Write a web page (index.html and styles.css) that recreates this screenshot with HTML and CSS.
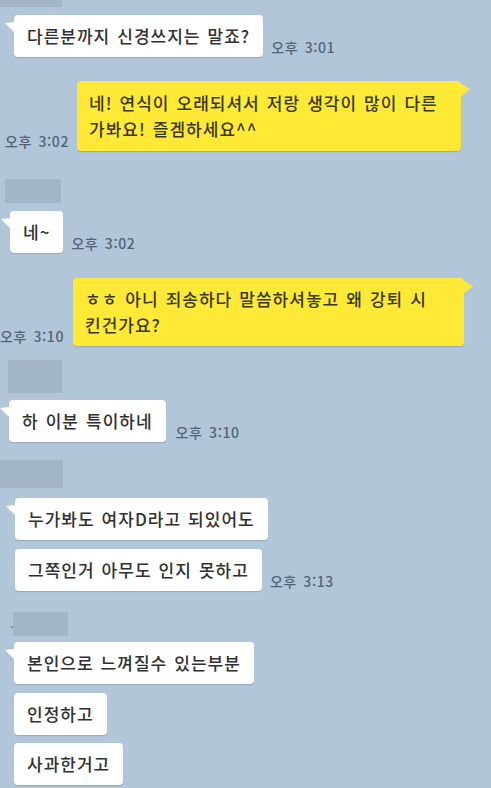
FILE: index.html
```html
<!DOCTYPE html>
<html lang="ko">
<head>
<meta charset="utf-8">
<link rel="stylesheet" href="styles.css">
</head>
<body>
<div class="chat">
  <div class="name name--a"></div>
  <div class="row in-a gap-8">
    <div class="bubble tail">다른분까지 신경쓰지는 말죠?</div>
    <span class="time">오후 3:01</span>
  </div>
  <div class="row out-a gap-24">
    <span class="time">오후 3:02</span>
    <div class="bubble bubble--out bubble--w1 tail-r">네! 연식이 오래되셔서 저랑 생각이 많이 다른 가봐요! 즐겜하세요^^</div>
  </div>

  <div class="name name--b gap-28"></div>
  <div class="row in-b gap-8">
    <div class="bubble tail">네~</div>
    <span class="time">오후 3:02</span>
  </div>
  <div class="row out-b gap-25">
    <span class="time">오후 3:10</span>
    <div class="bubble bubble--out bubble--w2 tail-r">ㅎㅎ 아니 죄송하다 말씀하셔놓고 왜 강퇴 시 킨건가요?</div>
  </div>

  <div class="name name--c gap-14"></div>
  <div class="row in-c gap-7">
    <div class="bubble tail">하 이분 특이하네</div>
    <span class="time time--wide">오후 3:10</span>
  </div>

  <div class="name name--d gap-18"></div>
  <div class="row in-d gap-10">
    <div class="bubble tail">누가봐도 여자D라고 되있어도</div>
  </div>
  <div class="row in-d gap-9">
    <div class="bubble">그쪽인거 아무도 인지 못하고</div>
    <span class="time">오후 3:13</span>
  </div>

  <div class="name name--e gap-21"><span class="dot"></span></div>
  <div class="row in-e gap-6">
    <div class="bubble tail">본인으로 느껴질수 있는부분</div>
  </div>
  <div class="row in-e gap-9">
    <div class="bubble">인정하고</div>
  </div>
  <div class="row in-e gap-8">
    <div class="bubble">사과한거고</div>
  </div>
</div>
</body>
</html>
```

FILE: styles.css
```css
html, body {
  margin: 0;
  padding: 0;
}

body {
  background: #b2c6d9;
  font-family: "Noto Sans CJK KR", "Noto Sans", sans-serif;
  height: 788px;
  overflow: hidden;
}

.chat {
  display: flex;
  flex-direction: column;
  align-items: flex-start;
}

.row {
  display: flex;
  align-items: flex-end;
  gap: 8px;
}

.name {
  background: #a3b5c8;
  height: 24px;
  position: relative;
}

.name--a { width: 62px; height: 7px; }
.name--b { width: 56px; margin-left: 5px; }
.name--c { width: 54px; margin-left: 8px; height: 33px; }
.name--d { width: 63px; height: 28px; }
.name--e { width: 55px; margin-left: 13px; }

.dot {
  position: absolute;
  left: -2px;
  top: 14px;
  width: 2px;
  height: 2px;
  background: #7d8fa3;
}

.gap-6 { margin-top: 6px; }
.gap-7 { margin-top: 7px; }
.gap-8 { margin-top: 8px; }
.gap-9 { margin-top: 9px; }
.gap-10 { margin-top: 10px; }
.gap-14 { margin-top: 14px; }
.gap-18 { margin-top: 18px; }
.gap-21 { margin-top: 21px; }
.gap-24 { margin-top: 24px; }
.gap-25 { margin-top: 25px; }
.gap-28 { margin-top: 28px; }

.in-a { margin-left: 14px; }
.in-b { margin-left: 10px; }
.in-c { margin-left: 9px; }
.in-d { margin-left: 15px; }
.in-e { margin-left: 14px; }
.out-a { margin-left: 5px; }
.out-b { margin-left: 0; gap: 9px; }

.bubble {
  position: relative;
  background: #ffffff;
  border-radius: 4px;
  padding: 8px 13px;
  font-size: 17px;
  font-weight: 500;
  line-height: 26px;
  color: #303030;
  letter-spacing: 1px;
  word-spacing: 1.3px;
  white-space: nowrap;
  word-break: keep-all;
  box-shadow: 0 1px 1px rgba(60, 80, 100, 0.25);
}

.bubble--out {
  background: #feea36;
  color: #3a3820;
  padding: 9px 12px;
  white-space: normal;
  box-sizing: border-box;
}

.bubble--w1 { width: 384px; }
.bubble--w2 { width: 391px; padding-top: 8px; padding-bottom: 8px; }

.tail::before {
  content: "";
  position: absolute;
  left: -9px;
  top: 7px;
  width: 10px;
  height: 11px;
  background: #ffffff;
  clip-path: polygon(0 10%, 100% 0, 100% 100%);
}

.tail-r::after {
  content: "";
  position: absolute;
  right: -9px;
  top: 2px;
  width: 10px;
  height: 14px;
  background: #feea36;
  clip-path: polygon(0 0, 100% 45%, 0 100%);
}

.time {
  font-size: 14px;
  font-weight: 500;
  line-height: 16px;
  color: #536377;
  margin-bottom: 2px;
  letter-spacing: 0.6px;
  word-spacing: 2px;
  white-space: nowrap;
}

.time--wide { margin-left: 2px; }
```
